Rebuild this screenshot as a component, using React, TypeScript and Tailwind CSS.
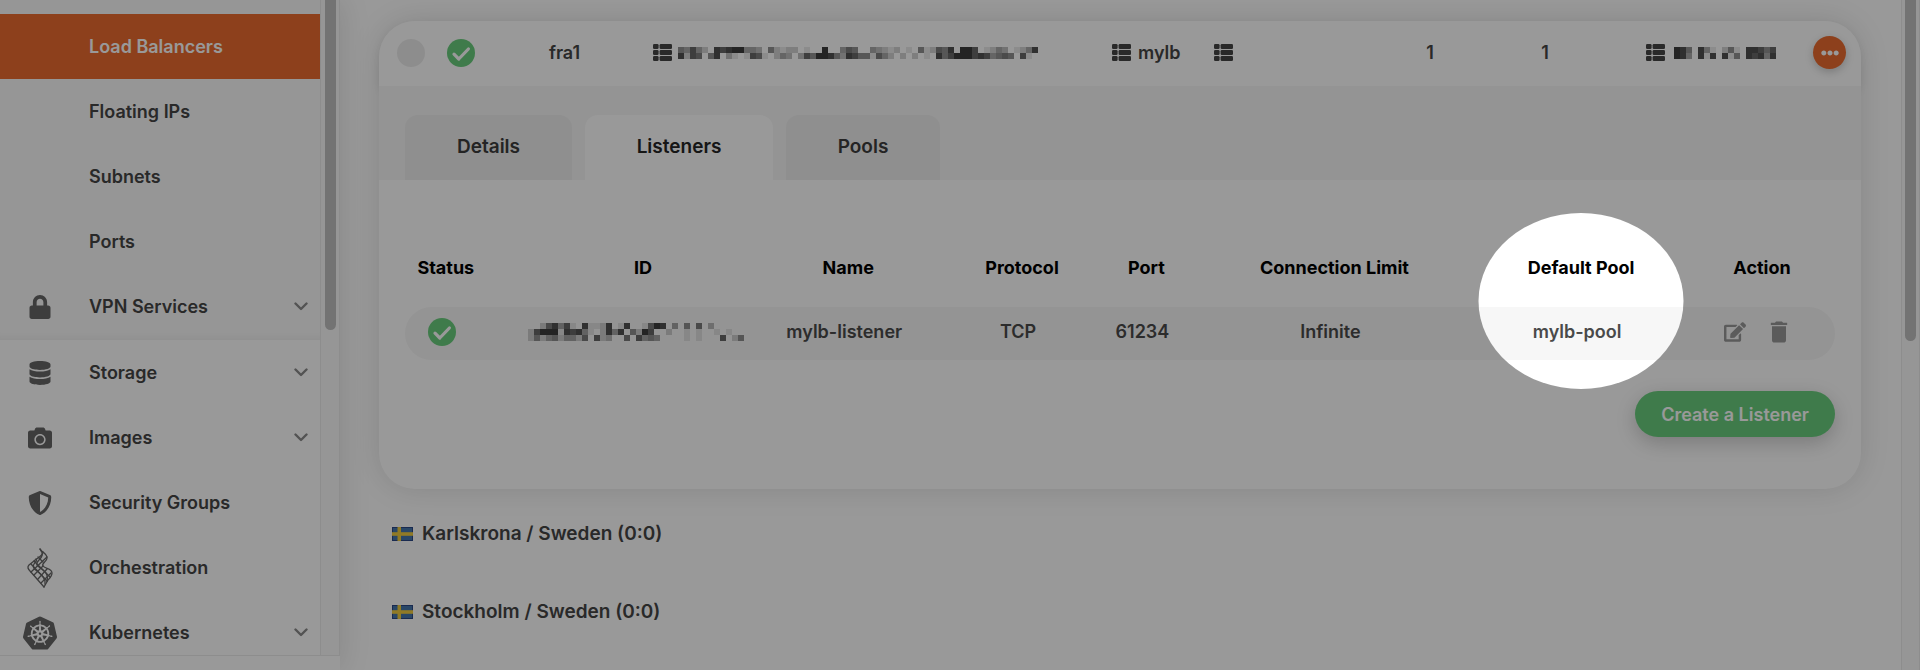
import React from "react";
import { FaCamera, FaDatabase, FaEdit, FaEllipsisH, FaLock, FaShieldAlt } from "react-icons/fa";
import { MdDelete } from "react-icons/md";
import { SiKubernetes } from "react-icons/si";

/* ---------- small drawings ---------- */

function ChevronDown() {
  return (
    <svg className="h-[9px] w-[14px] text-[#8a8a8a]" viewBox="0 0 14 9" fill="none" aria-hidden="true">
      <path d="M1.5 1.5 7 7l5.5-5.5" stroke="currentColor" strokeWidth="2.4" strokeLinecap="round" strokeLinejoin="round" />
    </svg>
  );
}

function StatusOk() {
  return (
    <svg className="h-7 w-7" viewBox="0 0 28 28" fill="none" role="img" aria-label="Online">
      <circle cx="14" cy="14" r="14" fill="#69ce7d" />
      <path d="M7 15.2 11.8 20 21.4 10" stroke="#fff" strokeWidth="3.2" strokeLinecap="round" strokeLinejoin="round" />
    </svg>
  );
}

function ListIcon() {
  return (
    <svg className="h-[17px] w-[19px] shrink-0" viewBox="0 0 19 17" fill="currentColor" aria-hidden="true">
      {[0, 6, 12].map((y) => (
        <React.Fragment key={y}>
          <rect x="0" y={y} width="5.6" height="5" rx="1.3" />
          <rect x="6.6" y={y} width="12.4" height="5" rx="1.3" />
        </React.Fragment>
      ))}
    </svg>
  );
}

function MeshIcon() {
  return (
    <svg className="h-10 w-[27px]" viewBox="0 0 27 40" fill="none" stroke="currentColor" strokeWidth="1.3" strokeLinecap="round" aria-hidden="true">
      <path d="M14 1C15 4 21 5 21 10C21 14 15 15 17 18C19 21 26 20 26 25C26 28 24 30 22 32L18 39" />
      <path d="M14 1C18 6 16 9 13 12C10 15 10 17 13 19C17 22 23 25 21 33" />
      <path d="M10 11C12 13 9 14 8 16C6 19 8 21 11 23C15 26 20 30 19 36" />
      <path d="M17 4C17 8 11 10 8 13L3 17C1 19 2 21 4 23L18 39" />
      <path d="M21 9 5 24M17 18 8 27M21 21 12 31M25 25 15 35" />
      <path d="M12 9 17 14M8 13 24 29M5 16 21 33" />
    </svg>
  );
}

function SwedishFlag() {
  return (
    <svg className="h-[14px] w-[21px]" viewBox="0 0 21 14" role="img" aria-label="Sweden">
      <rect width="21" height="14" fill="#2a4686" />
      <rect x="1" y="1" width="19" height="12" fill="#4577ac" />
      <rect x="5.5" width="3.5" height="14" fill="#f0cc40" />
      <rect y="5.2" width="21" height="3.6" fill="#f0cc40" />
    </svg>
  );
}

/* Redacted value: each digit is the darkness (0-9) of one 6px block. */
function Mosaic({ rows }: { rows: string[] }) {
  const width = rows[0].length * 6;
  const height = rows.length * 6;
  return (
    <svg width={width} height={height} viewBox={`0 0 ${width} ${height}`} shapeRendering="crispEdges" className="shrink-0" role="img" aria-label="Redacted">
      {rows.map((row, y) =>
        row.split("").map((level, x) =>
          level === "0" ? null : (
            <rect key={`${x}-${y}`} x={x * 6} y={y * 6} width="6" height="6" fill="#3c3c3c" opacity={Number(level) / 9} />
          ),
        ),
      )}
    </svg>
  );
}

const NAME_MOSAIC = [
  "547420878994430521220100900465004321201051265809970124301248",
  "827605803101761024303759985387551642020201085799978745650710",
];
const ID_MOSAIC = [
  "002684710811280180016980405060300000",
  "279991878410284805297002001010010100",
  "252452442607230060745400001010007025",
];
const IP_MOSAIC = ["98508410251088757", "98408180815087848"];

/* ---------- sidebar ---------- */

type Item = { label: string; icon?: React.ReactNode; open?: boolean; active?: boolean };

const networkItems: Item[] = [
  { label: "Load Balancers", active: true },
  { label: "Floating IPs" },
  { label: "Subnets" },
  { label: "Ports" },
  { label: "VPN Services", icon: <FaLock className="h-6 w-[22px]" />, open: true },
];

const mainItems: Item[] = [
  { label: "Storage", icon: <FaDatabase className="h-6 w-[22px]" />, open: true },
  { label: "Images", icon: <FaCamera className="h-6 w-6" />, open: true },
  { label: "Security Groups", icon: <FaShieldAlt className="h-6 w-6" /> },
  { label: "Orchestration", icon: <MeshIcon /> },
  { label: "Kubernetes", icon: <SiKubernetes className="h-[34px] w-[34px]" />, open: true },
];

function NavRow({ label, icon, open, active }: Item) {
  return (
    <li>
      <a
        href="#"
        aria-current={active ? "page" : undefined}
        className={`flex h-[65px] items-center pr-3 text-[18px] font-semibold ${
          active ? "bg-[#eb6c30] text-white" : "text-[#454545]"
        }`}
      >
        <span className="flex w-[89px] shrink-0 items-center justify-center pr-[10px] text-[#666]">{icon}</span>
        <span className="flex-1">{label}</span>
        {open && <ChevronDown />}
      </a>
    </li>
  );
}

function Sidebar() {
  return (
    <aside className="flex w-[340px] shrink-0 flex-col bg-white shadow-[0_0_30px_rgba(0,0,0,0.12)]">
      <div className="flex h-[655px] overflow-hidden">
        <nav className="flex-1" aria-label="Main">
          <ul className="bg-[#fbfbfb] pb-px pt-[14px] shadow-[inset_0_-10px_10px_-8px_rgba(0,0,0,0.06)]">
            {networkItems.map((item) => (
              <NavRow key={item.label} {...item} />
            ))}
          </ul>
          <ul>
            {mainItems.map((item) => (
              <NavRow key={item.label} {...item} />
            ))}
          </ul>
        </nav>
        <div className="flex w-5 justify-center border-x border-[#ececec] bg-[#fafafa]">
          <div className="h-[330px] w-[11px] rounded-b-full bg-[#c0c0c0]" />
        </div>
      </div>
      <div className="flex-1 border-t border-[#ececec] bg-white" />
    </aside>
  );
}

/* ---------- load balancer card ---------- */

function SummaryRow() {
  return (
    <div className="grid h-[65px] grid-cols-[68px_29px_177fr_459fr_102fr_165fr_102fr_128fr_204fr_48px] items-center rounded-t-[36px] bg-white pb-[2px] text-[18px] font-semibold text-[#454545] shadow-[0_4px_10px_rgba(0,0,0,0.08)]">
      <div className="pl-[18px]">
        <button type="button" aria-label="Select load balancer" className="block h-7 w-7 rounded-full bg-[#ececec]" />
      </div>
      <StatusOk />
      <div className="text-center">fra1</div>
      <div className="flex items-center gap-[6px]">
        <ListIcon />
        <Mosaic rows={NAME_MOSAIC} />
      </div>
      <div className="flex items-center gap-[7px]">
        <ListIcon />
        mylb
      </div>
      <div>
        <ListIcon />
      </div>
      <div className="text-center">1</div>
      <div className="text-center">1</div>
      <div className="flex items-center justify-center gap-[9px]">
        <ListIcon />
        <Mosaic rows={IP_MOSAIC} />
      </div>
      <button
        type="button"
        aria-label="More actions"
        className="flex h-[33px] w-[33px] items-center justify-center rounded-full bg-[#eb6c30] text-white shadow-[0_3px_8px_rgba(0,0,0,0.2)]"
      >
        <FaEllipsisH className="h-[18px] w-[18px]" />
      </button>
    </div>
  );
}

function Tabs() {
  const tab = "h-[65px] rounded-t-[13px] text-[19px] font-semibold";
  return (
    <div role="tablist" className="flex gap-[13px] bg-[#f7f7f7] px-[26px] pt-[29px]">
      <button type="button" role="tab" aria-selected="false" className={`${tab} w-[167px] bg-[#eeeeee] text-[#3c3c3c]`}>
        Details
      </button>
      <button type="button" role="tab" aria-selected="true" className={`${tab} w-[188px] bg-white text-[#262626]`}>
        Listeners
      </button>
      <button type="button" role="tab" aria-selected="false" className={`${tab} w-[154px] bg-[#eeeeee] text-[#3c3c3c]`}>
        Pools
      </button>
    </div>
  );
}

function ListenersTable() {
  return (
    <table className="w-full table-fixed text-center text-[18px] font-semibold">
      <thead className="text-black">
        <tr className="h-20 [&>th]:pt-px">
          <th className="w-[9.2%] pr-[50px]">Status</th>
          <th className="w-[14.9%]">ID</th>
          <th className="w-[13.8%]">Name</th>
          <th className="w-[10.5%]">Protocol</th>
          <th className="w-[6.9%]">Port</th>
          <th className="w-[19.4%] whitespace-nowrap">Connection Limit</th>
          <th className="relative w-[15.1%] whitespace-nowrap">
            Default Pool
            <span className="pointer-events-none absolute -top-[14px] left-1/2 h-[176px] w-[205px] -translate-x-1/2 rounded-[50%] shadow-[0_0_0_3000px_rgba(0,0,0,0.4)]" />
          </th>
          <th className="w-[10.2%]">Action</th>
        </tr>
      </thead>
      <tbody className="text-[#4a4a4a]">
        <tr className="h-[53px] [&>td]:bg-[#f7f7f7] [&>td]:pb-[4px] [&>td]:pr-[8px]">
          <td className="rounded-l-full">
            <div className="flex justify-center pr-[50px]">
              <StatusOk />
            </div>
          </td>
          <td>
            <div className="flex justify-center pr-[6px]">
              <Mosaic rows={ID_MOSAIC} />
            </div>
          </td>
          <td className="whitespace-nowrap">mylb-listener</td>
          <td>TCP</td>
          <td>61234</td>
          <td>Infinite</td>
          <td>mylb-pool</td>
          <td className="rounded-r-full">
            <div className="flex items-center justify-center gap-[19px] text-[#989898]">
              <button type="button" aria-label="Edit listener">
                <FaEdit className="h-[22px] w-[22px]" />
              </button>
              <button type="button" aria-label="Delete listener">
                <MdDelete className="h-[28px] w-[28px]" />
              </button>
            </div>
          </td>
        </tr>
      </tbody>
    </table>
  );
}

function Location({ name }: { name: string }) {
  return (
    <h2 className="flex h-[78px] items-center gap-[9px] text-[19px] font-semibold text-[#454545]">
      <SwedishFlag />
      {name}
    </h2>
  );
}

export default function App() {
  return (
    <div className="flex min-h-screen w-full overflow-hidden bg-white font-['Inter','Liberation_Sans',sans-serif]">
      <Sidebar />
      <main className="min-w-0 flex-1 pl-[39px] pr-10 pt-[21px]">
        <section className="rounded-[36px] bg-white shadow-[0_0_30px_rgba(0,0,0,0.12)]">
          <SummaryRow />
          <Tabs />
          <div className="px-[26px] pb-[52px] pt-[47px]">
            <ListenersTable />
            <div className="mt-[31px] flex justify-end">
              <button
                type="button"
                className="h-[46px] rounded-full bg-[#69ce7d] px-[26px] text-[18px] font-semibold text-white shadow-[0_6px_20px_rgba(0,0,0,0.2)]"
              >
                Create a Listener
              </button>
            </div>
          </div>
        </section>
        <div className="pl-[13px] pt-[6px]">
          <Location name="Karlskrona / Sweden (0:0)" />
          <Location name="Stockholm / Sweden (0:0)" />
        </div>
      </main>
      <div className="flex w-[19px] shrink-0 justify-center border-x border-[#ececec] bg-[#fafafa]">
        <div className="h-[341px] w-[11px] rounded-b-full bg-[#c0c0c0]" />
      </div>
    </div>
  );
}
